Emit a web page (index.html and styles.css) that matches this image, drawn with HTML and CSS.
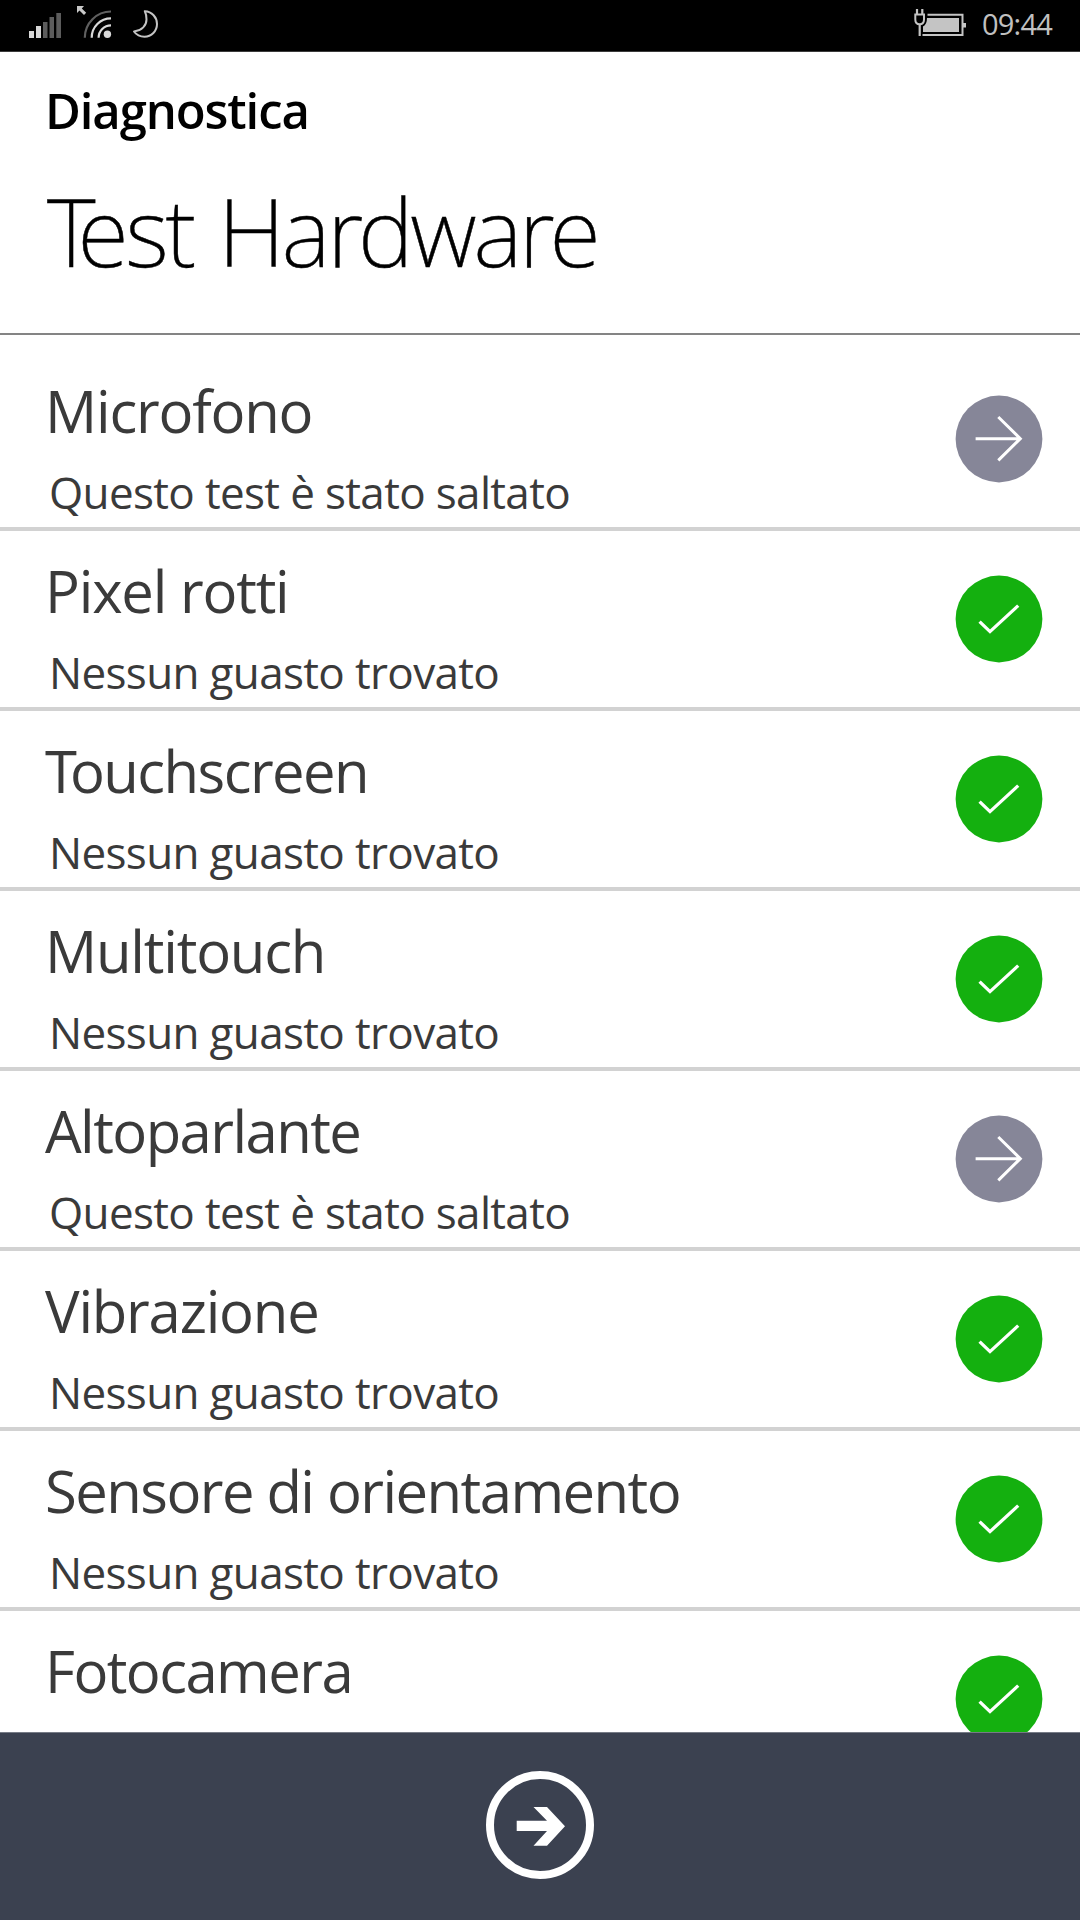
FILE: index.html
```html
<!DOCTYPE html>
<html lang="it">
<head>
<meta charset="utf-8">
<title>Diagnostica</title>
<link rel="stylesheet" href="styles.css">
</head>

<body>

<!-- icone usate nella lista -->
<svg class="defs">
    <symbol id="skip" viewBox="0 0 88 88">
        <circle cx="44" cy="44" r="43.4" fill="#868698"/>
        <path d="M20.6 43.700H65M43.3 22L65.3 43.700L43.3 65.4" fill="none" stroke="#fff" stroke-width="3"/>
    </symbol>
    <symbol id="ok" viewBox="0 0 88 88">
        <circle cx="44" cy="44" r="43.4" fill="#14b00f"/>
        <path d="M24.6 46.6L35 56.6L63.2 30.6" fill="none" stroke="#fff" stroke-width="3.3"/>
    </symbol>
</svg>

<div class="statusbar">
    <svg class="left" width="170" height="52" viewBox="0 0 170 52">
        <g fill="#d8d8d8">
            <rect x="29" y="31" width="5" height="7"/>
            <rect x="36" y="26" width="5" height="12"/>
        </g>
        <g fill="#5c5c5c">
            <rect x="43" y="22" width="4.5" height="16"/>
            <rect x="49.5" y="17" width="4.5" height="21"/>
            <rect x="56.3" y="13" width="4.7" height="25"/>
        </g>
        <path d="M77 6H84L81.8 8.4L86.2 12.8L84 15L79.5 10.6L77 13Z" fill="#c8c8c8"/>
        <g fill="none" stroke="#d8d8d8" stroke-width="2.2">
            <path d="M84.8 37.7A26.2 26.2 0 0 1 111 11.5" stroke="#606060"/>
            <path d="M91.7 37.7A19.3 19.3 0 0 1 111 18.4"/>
            <path d="M98.6 37.7A12.4 12.4 0 0 1 111 25.3"/>
        </g>
        <circle cx="107.4" cy="34.2" r="3.7" fill="#d8d8d8"/>
        <path d="M144.8 11.2C152 11.5 157 17.5 157 24C157 31 151.5 36.7 144.5 36.7C140.5 36.7 136.5 35 134 31.5C142 30.5 146.5 25.5 146.5 19.5C146.5 16.5 146 13.5 144.8 11.2Z" fill="none" stroke="#c4c4c4" stroke-width="2" stroke-linejoin="round"/>
    </svg>
    <svg class="battery" width="56" height="52" viewBox="910 0 56 52">
        <path d="M927.5 14.7H962.5V35H922.5" fill="none" stroke="#c4c4c4" stroke-width="2"/>
        <rect x="963" y="23" width="3" height="4.5" fill="#c4c4c4"/>
        <path d="M927 18H959V32H923V26.5Q927 24.5 927 18Z" fill="#c4c4c4"/>
        <path d="M915.3 14.5V19.500Q915.3 24.3 919.6 24.3Q924 24.3 924 19.500V14.5Z" fill="#000" stroke="#c4c4c4" stroke-width="2"/>
        <path d="M917 9V14M922.3 9V14M919.7 24V36" fill="none" stroke="#c4c4c4" stroke-width="2.2"/>
    </svg>
    <span class="time">09:44</span>
</div>

<header>
    <h2>Diagnostica</h2>
    <h1><span class="t">T</span>est Hardware</h1>
</header>

<ul class="list">
    <li>
        <div>
            <h3>Microfono</h3>
            <p>Questo test è stato saltato</p>
        </div>
        <svg class="state"><use href="#skip"/></svg>
    </li>
    <li>
        <div>
            <h3>Pixel rotti</h3>
            <p>Nessun guasto trovato</p>
        </div>
        <svg class="state"><use href="#ok"/></svg>
    </li>
    <li>
        <div>
            <h3 class="long"><span class="t">T</span>ouchscreen</h3>
            <p>Nessun guasto trovato</p>
        </div>
        <svg class="state"><use href="#ok"/></svg>
    </li>
    <li>
        <div>
            <h3>Multitouch</h3>
            <p>Nessun guasto trovato</p>
        </div>
        <svg class="state"><use href="#ok"/></svg>
    </li>
    <li>
        <div>
            <h3 class="long">Altoparlante</h3>
            <p>Questo test è stato saltato</p>
        </div>
        <svg class="state"><use href="#skip"/></svg>
    </li>
    <li>
        <div>
            <h3>Vibrazione</h3>
            <p>Nessun guasto trovato</p>
        </div>
        <svg class="state"><use href="#ok"/></svg>
    </li>
    <li>
        <div>
            <h3 class="long">Sensore di orientamento</h3>
            <p>Nessun guasto trovato</p>
        </div>
        <svg class="state"><use href="#ok"/></svg>
    </li>
    <li>
        <div>
            <h3 class="long">Fotocamera</h3>
        </div>
        <svg class="state"><use href="#ok"/></svg>
    </li>
</ul>

<footer>
    <svg width="110" height="110" viewBox="0 0 110 110">
        <circle cx="55" cy="55" r="50" fill="none" stroke="#fff" stroke-width="8"/>
        <path d="M31.7 50.7H62L48.5 37H62L80 56.2L62 75.800H48.5L62 61H31.7Z" fill="#fff"/>
    </svg>
</footer>

</body>
</html>
```
FILE: styles.css
```css
* {
  box-sizing: border-box;
  margin: 0;
  padding: 0;
}
body {
  height: 1920px;
  display: flex;
  flex-direction: column;
  overflow: hidden;
  background-color: white;
  font-family: "Open Sans", "Noto Sans", sans-serif;
  color: #3a3a3a;
}
.defs {
  display: none;
}

/* barra di stato */
.statusbar {
  flex: none;
  height: 52px;
  display: flex;
  background-color: black;
  border-bottom: 1px solid #3c3c3c;
}
.battery {
  margin-left: auto;
}
.time {
  width: 114px;
  padding-left: 16px;
  font-size: 29px;
  line-height: 48px;
  letter-spacing: -0.8px;
  color: #c0c0c0;
}

header {
  flex: none;
  height: 283px;
  padding: 24px 0 0 45px;
  border-bottom: 2px solid #848484;
  color: black;
}
h2 {
  font-size: 49px;
  font-weight: 600;
  line-height: 68px;
  letter-spacing: -1.1px;
}
h1 {
  margin-top: 27px;
  font-family: "Noto Sans", sans-serif;
  font-size: 94px;
  font-weight: 200;
  line-height: 120px;
  letter-spacing: -3.35px;
  word-spacing: 4px;
  padding-left: 2px;
  -webkit-text-stroke: 0.5px black;
}
h1 .t {
  letter-spacing: -18px;
}

/* lista dei test */
.list {
  flex: 1;
  min-height: 0;
  overflow: hidden;
  padding-top: 16px;
  list-style: none;
}
.list li {
  height: 180px;
  display: flex;
  justify-content: space-between;
  padding: 24px 37px 0 45px;
  border-bottom: 4px solid #d2d2d2;
}
h3 {
  font-size: 58px;
  font-weight: 400;
  line-height: 72px;
  letter-spacing: -1.2px;
}
.long {
  letter-spacing: -1.55px;
}
h3 .t {
  letter-spacing: -7px;
}
p {
  margin-top: 16px;
  padding-left: 4px;
  font-size: 44px;
  line-height: 58px;
  letter-spacing: -0.65px;
}
.state {
  width: 88px;
  height: 88px;
  margin-top: 20px;
}

footer {
  flex: none;
  height: 188px;
  padding-top: 37px;
  background-color: #3b4150;
  border-top: 1px solid #767b86;
  text-align: center;
}
```
